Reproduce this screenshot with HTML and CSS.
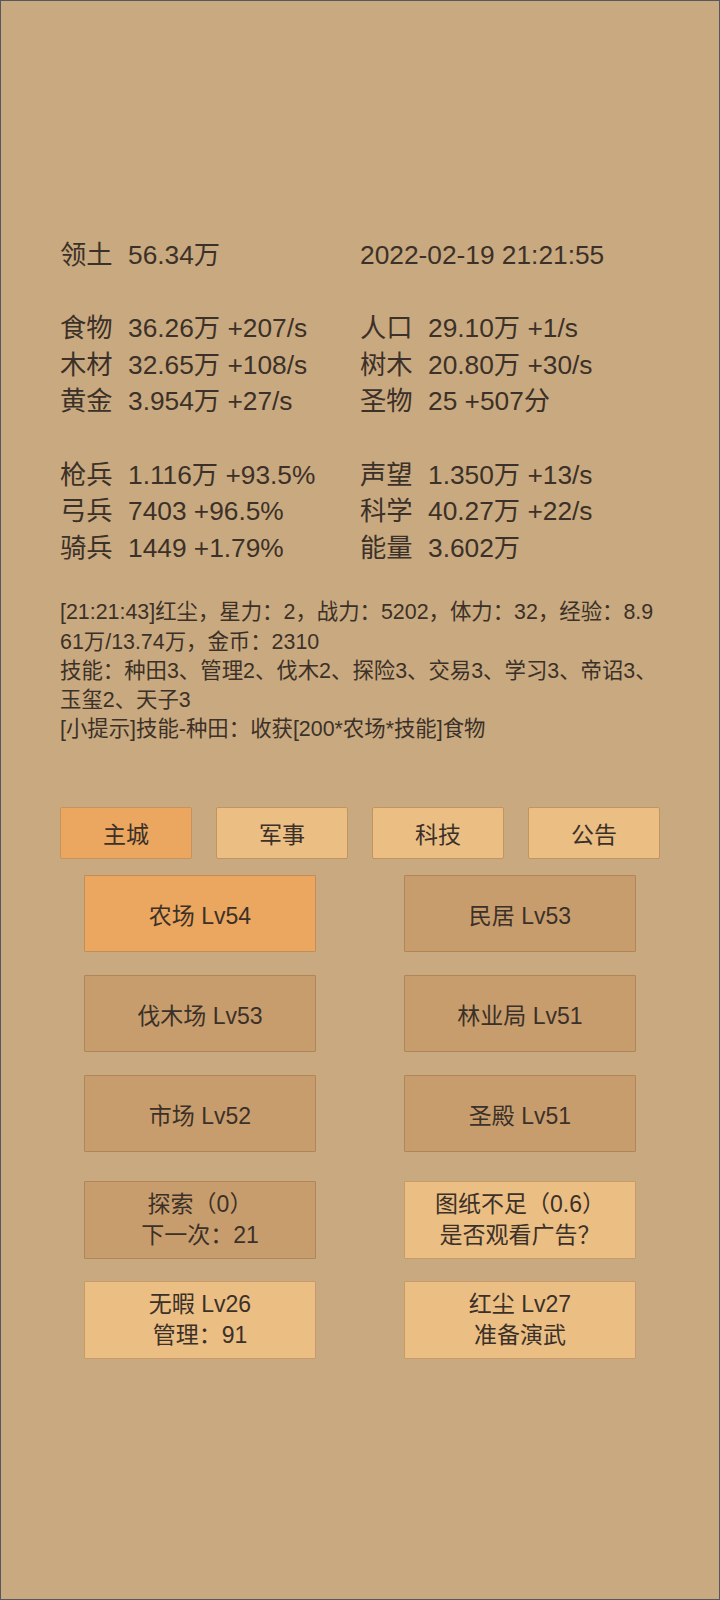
FILE: index.html
```html
<!DOCTYPE html>
<html lang="zh">
<head>
<meta charset="utf-8">
<title>主城</title>
<link rel="stylesheet" href="styles.css">
</head>
<body>
<div class="screen">
  <div class="stats">
    <div class="cell"><span class="lbl">领土</span>56.34万</div>
    <div class="cell">2022-02-19 21:21:55</div>
    <div class="cell blank"></div>
    <div class="cell blank"></div>
    <div class="cell"><span class="lbl">食物</span>36.26万 +207/s</div>
    <div class="cell"><span class="lbl">人口</span>29.10万 +1/s</div>
    <div class="cell"><span class="lbl">木材</span>32.65万 +108/s</div>
    <div class="cell"><span class="lbl">树木</span>20.80万 +30/s</div>
    <div class="cell"><span class="lbl">黄金</span>3.954万 +27/s</div>
    <div class="cell"><span class="lbl">圣物</span>25 +507分</div>
    <div class="cell blank"></div>
    <div class="cell blank"></div>
    <div class="cell"><span class="lbl">枪兵</span>1.116万 +93.5%</div>
    <div class="cell"><span class="lbl">声望</span>1.350万 +13/s</div>
    <div class="cell"><span class="lbl">弓兵</span>7403 +96.5%</div>
    <div class="cell"><span class="lbl">科学</span>40.27万 +22/s</div>
    <div class="cell"><span class="lbl">骑兵</span>1449 +1.79%</div>
    <div class="cell"><span class="lbl">能量</span>3.602万</div>
  </div>

  <div class="log">
    <div class="line">[21:21:43]红尘，星力：2，战力：5202，体力：32，经验：8.9</div>
    <div class="line">61万/13.74万，金币：2310</div>
    <div class="line">技能：种田3、管理2、伐木2、探险3、交易3、学习3、帝诏3、</div>
    <div class="line">玉玺2、天子3</div>
    <div class="line">[小提示]技能-种田：收获[200*农场*技能]食物</div>
  </div>

  <div class="tabs">
    <div class="tab active">主城</div>
    <div class="tab">军事</div>
    <div class="tab">科技</div>
    <div class="tab">公告</div>
  </div>

  <div class="grid">
    <div class="btn active">农场 Lv54</div>
    <div class="btn">民居 Lv53</div>
    <div class="btn">伐木场 Lv53</div>
    <div class="btn">林业局 Lv51</div>
    <div class="btn">市场 Lv52</div>
    <div class="btn">圣殿 Lv51</div>
  </div>

  <div class="grid grid2">
    <div class="btn two">探索（0）<br>下一次：21</div>
    <div class="btn two light">图纸不足（0.6）<br>是否观看广告？</div>
    <div class="btn two light">无暇 Lv26<br>管理：91</div>
    <div class="btn two light">红尘 Lv27<br>准备演武</div>
  </div>
</div>
</body>
</html>
```

FILE: styles.css
```css
html, body {
  margin: 0;
  padding: 0;
}

body {
  font-family: "Liberation Sans", "Noto Sans CJK SC", sans-serif;
  color: #3b3128;
  background: #c9a97f;
}

.screen {
  box-sizing: border-box;
  width: 720px;
  height: 1600px;
  border: 1px solid #545863;
  background: #c9a97f;
  padding: 236px 59px 0 59px;
}

.stats {
  display: grid;
  grid-template-columns: 300px 300px;
  font-size: 26.3px;
  line-height: 36.6px;
}

.cell {
  white-space: nowrap;
  height: 36.6px;
}

.lbl {
  display: inline-block;
  width: 68px;
}

.log {
  margin-top: 32px;
  font-size: 21.4px;
  line-height: 29.2px;
}

.line {
  white-space: nowrap;
}

.tabs {
  margin-top: 63px;
  display: grid;
  grid-template-columns: repeat(4, 132px);
  column-gap: 24px;
}

.tab {
  box-sizing: border-box;
  height: 52px;
  display: flex;
  align-items: center;
  justify-content: center;
  font-size: 23px;
  background: #ebbe84;
  border: 1px solid #c4935f;
  border-radius: 2px;
}

.tab.active {
  background: #eba65f;
}

.grid {
  margin-top: 16px;
  padding: 0 24px;
  display: grid;
  grid-template-columns: 232px 232px;
  column-gap: 88px;
  row-gap: 23px;
}

.grid2 {
  margin-top: 29px;
  row-gap: 22px;
}

.btn {
  box-sizing: border-box;
  height: 77px;
  display: flex;
  align-items: center;
  justify-content: center;
  text-align: center;
  font-size: 23px;
  background: #c89d6d;
  border: 1px solid #b28556;
  border-radius: 1px;
}

.btn.active {
  background: #eba65f;
  border-color: #c28d57;
}

.btn.light {
  background: #ebbe84;
  border-color: #c9996a;
}

.btn.two {
  height: 78px;
  line-height: 31.7px;
}
```
